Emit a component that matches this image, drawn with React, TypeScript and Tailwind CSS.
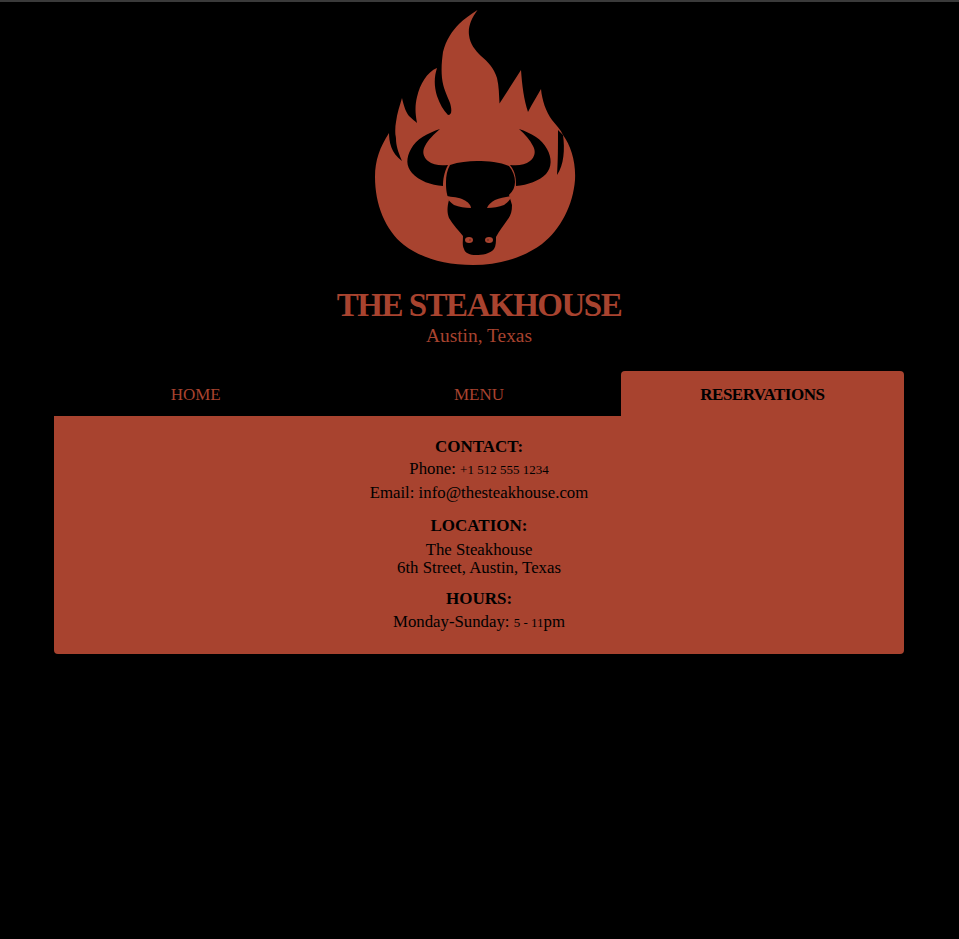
const tabs = ["HOME", "MENU", "RESERVATIONS"];

function Logo() {
  return (
    <svg width="208" height="256" viewBox="375 10 208 256" className="block">
      {/* flame */}
      <path
        fill="#a8432f"
        d="M477.5 10 C471 19 468 27 469 35 C470 44 475 50 481 56 C488 62 494 68 497 78 C499 86 499 95 499.5 103.5 L521 70 C522 85 524 100 528 112 C532 104 537 96 541 89 C542 100 546 112 552 120 C556 125 561 130 563 135 C571 146 576 162 575 180 C573 205 561 229 542 244 C523 258 499 265 473 265 C445 265 421 258 404 245 C385 230 375 204 375 177 C375 160 380 147 389 133 L396 141 C395 133 395 127 396 122 C397 113 400 105 402 98 C404 107 406 112 409 116 C412 119 415 121 417 123 C415 113 415 105 417 97 C420 84 427 72 437 68 C434 77 434 86 437 96 C440 104 443 110 448 115 C452 115 452 110 450 103 C447 95 443 88 442 78 C441 68 442 60 443 52 C446 40 452 31 459 24 C464 19 471 14 477.5 10 Z"
      />
      {/* slivers either side */}
      <path fill="#000" d="M389 132 C389 142 391 153 402 161 C398 152 396 145 396 139 L394 130 Z" />
      <path fill="#000" d="M563 135 C565 149 564 165 557 175 C558 160 558 148 558 130 Z" />
      {/* horns */}
      <path
        fill="#000"
        d="M440 129 C428 133 416 139 411 149 C406 158 406 166 412 173 C419 181 431 185 443 186 C443 180 444 172 448 165 C440 166 433 165 428 161 C423 157 422 151 425 146 C428 140 434 134 440 129 Z"
      />
      <path
        fill="#000"
        d="M519 129 C531 133 542 139 547 149 C552 158 552 167 546 174 C539 181 528 185 516 186 C516 180 516 172 510 165 C518 166 525 165 530 161 C535 157 536 151 533 146 C530 140 525 134 519 129 Z"
      />
      {/* head */}
      <path
        fill="#000"
        d="M450 165 C459 162 468 161 477 161 C488 161 500 162 509 166 C513 171 515 176 515 182 C515 187 513 191 509 195 L512 205 C512 211 511 215 508 219 C504 225 499 231 496 237 C496 241 496 246 494 249 C490 254 482 255 476 255 C470 255 465 253 464 249 C462 245 463 241 463 236 C459 231 453 225 449 218 C447 213 447 207 449 200 C446 193 446 187 446 182 C446 176 447 170 450 165 Z"
      />
      {/* brows */}
      <path fill="#a8432f" d="M446 196 C452 197 459 197 464 200 C468 202 471 205 471 208 C465 208 459 207 454 205 C451 203 448 200 446 196 Z" />
      <path fill="#a8432f" d="M512 196 C506 197 500 198 495 200 C491 202 488 205 487 208 C493 208 499 207 504 205 C507 203 510 200 512 196 Z" />
      {/* nostrils */}
      <ellipse cx="469" cy="240" rx="4" ry="3" fill="#a8432f" />
      <circle cx="470" cy="240" r="0.8" fill="#5a2318" />
      <ellipse cx="489" cy="240" rx="4" ry="3" fill="#a8432f" />
      <circle cx="488" cy="240" r="0.8" fill="#5a2318" />
    </svg>
  );
}

// old-style figures in the original sit at x-height, so digits run smaller
function Digits({ children }: { children: string }) {
  return <span className="text-[13px]">{children}</span>;
}

export default function App() {
  return (
    <div className="min-h-screen bg-black border-t-2 border-[#3a3a3a] pr-px font-['Liberation_Serif',serif]">
      <div className="mx-auto w-[850px] flex flex-col items-center">
        <div className="pt-2">
          <Logo />
        </div>
        <h1 className="mt-[19px] text-[33px] leading-[40px] font-bold tracking-[-1.5px] text-[#a8432f]">
          THE STEAKHOUSE
        </h1>
        <p className="-mt-[2px] text-[19.4px] leading-[26px] text-[#a8432f]">Austin, Texas</p>

        <div className="mt-[22px] w-full grid grid-cols-3 text-[17px]">
          {tabs.map((tab) => (
            <div
              key={tab}
              className={
                tab === "RESERVATIONS"
                  ? "h-[45px] pt-[2px] flex items-center justify-center rounded-t bg-[#a8432f] text-black font-bold tracking-[-0.5px]"
                  : "h-[45px] pt-[2px] flex items-center justify-center text-[#a8432f]"
              }
            >
              {tab}
            </div>
          ))}
        </div>

        <div className="w-full h-[238px] pt-[19px] rounded-b bg-[#a8432f] text-black text-center text-[16.8px]">
          <h2 className="text-[17px] font-bold leading-[23px]">CONTACT:</h2>
          <p className="-mt-px leading-[23px]">
            Phone: <Digits>+1 512 555 1234</Digits>
          </p>
          <p className="leading-[23px]">Email: info@thesteakhouse.com</p>
          <h2 className="mt-[10px] text-[17px] font-bold leading-[23px]">LOCATION:</h2>
          <p className="mt-[4px] leading-[18px]">The Steakhouse</p>
          <p className="leading-[18px]">6th Street, Austin, Texas</p>
          <h2 className="mt-[10px] text-[17px] font-bold leading-[23px]">HOURS:</h2>
          <p className="leading-[23px]">
            Monday-Sunday: <Digits>5 - 11</Digits>pm
          </p>
        </div>
      </div>
    </div>
  );
}
